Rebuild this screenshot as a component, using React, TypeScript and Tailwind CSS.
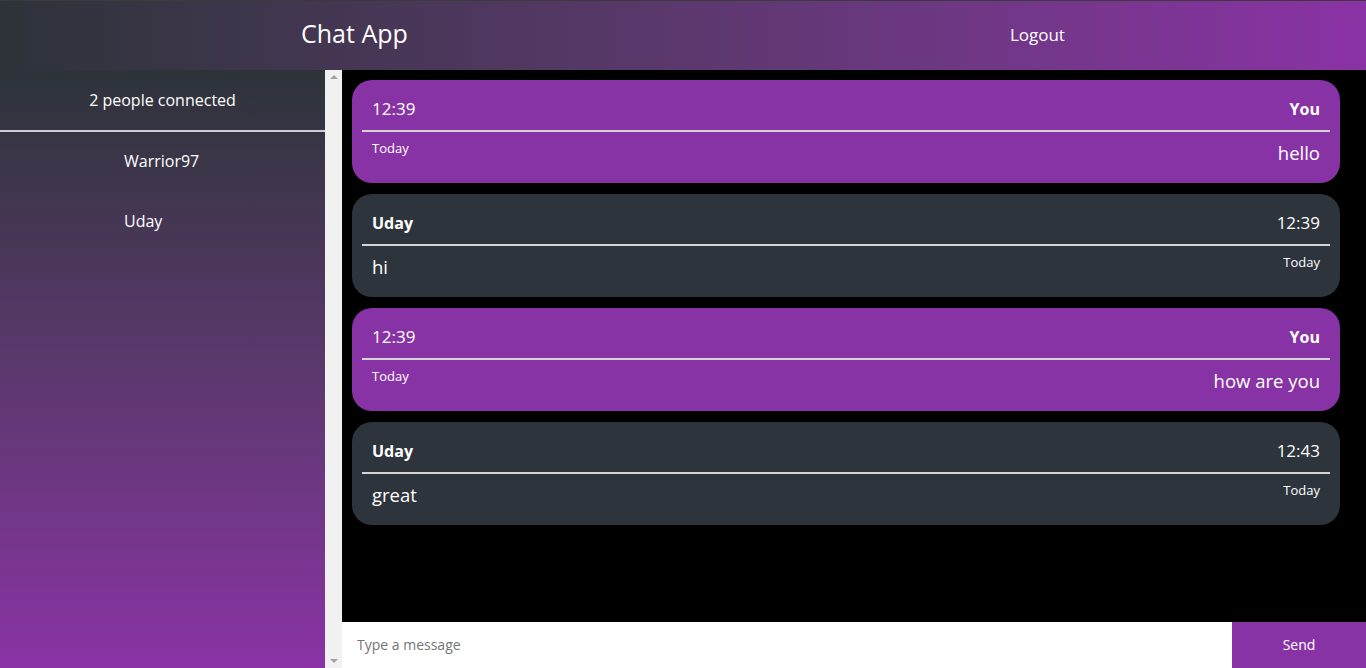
import React from 'react'

type Msg = {
  mine: boolean
  user: string
  time: string
  text: string
}

const messages: Msg[] = [
  { mine: true, user: 'You', time: '12:39', text: 'hello' },
  { mine: false, user: 'Uday', time: '12:39', text: 'hi' },
  { mine: true, user: 'You', time: '12:39', text: 'how are you' },
  { mine: false, user: 'Uday', time: '12:43', text: 'great' },
]

const users = ['Warrior97', 'Uday']

function Bubble({ msg }: { msg: Msg }) {
  const bg = msg.mine ? 'bg-[#8833a5]' : 'bg-[#2d343c]'
  return (
    <div className={`${bg} rounded-[20px] px-[10px] pb-[17px] text-white`}>
      <div className="flex items-center justify-between px-[10px] pt-[17px] pb-[9px] leading-[24px]">
        {msg.mine ? (
          <>
            <span className="text-[17px]">{msg.time}</span>
            <span className="text-[16px] font-bold">{msg.user}</span>
          </>
        ) : (
          <>
            <span className="text-[16px] font-bold">{msg.user}</span>
            <span className="text-[17px]">{msg.time}</span>
          </>
        )}
      </div>
      <div className="border-t-2 border-[#d4d4d4]" />
      <div className="flex items-start justify-between px-[10px] pt-[8px]">
        {msg.mine ? (
          <>
            <span className="text-[13px] leading-[16px]">Today</span>
            <span className="text-[18.5px] leading-[26px]">{msg.text}</span>
          </>
        ) : (
          <>
            <span className="text-[18.5px] leading-[26px]">{msg.text}</span>
            <span className="text-[13px] leading-[16px]">Today</span>
          </>
        )}
      </div>
    </div>
  )
}

export default function App() {
  return (
    <div
      className="h-screen flex flex-col overflow-hidden"
      style={{ fontFamily: '"Open Sans", "Noto Sans", sans-serif' }}
    >
      <header className="h-[70px] shrink-0 flex items-center justify-around bg-gradient-to-r from-[#2d3339] to-[#8a32a5] border-t border-[#3b3b3b] text-white">
        <h1 className="text-[25px] pb-[3px]">Chat App</h1>
        <button className="text-[17px] pb-[2px]">Logout</button>
      </header>

      <div className="flex flex-1 min-h-0">
        <aside className="w-[325px] shrink-0 bg-gradient-to-b from-[#2d3339] to-[#8a32a5] text-white">
          <div className="h-[62px] flex items-center justify-center border-b-2 border-[#cfcfcf] text-[16px]">
            2 people connected
          </div>
          <ul className="pl-[124px] text-[16px] -mt-[1px]">
            {users.map((u) => (
              <li key={u} className="h-[60px] flex items-center">
                {u}
              </li>
            ))}
          </ul>
        </aside>

        <div className="w-[17px] shrink-0 bg-[#f1f1f1] flex flex-col justify-between items-center py-[5px]">
          <span className="w-0 h-0 border-x-[4px] border-x-transparent border-b-[4px] border-b-[#a3a3a3]" />
          <span className="w-0 h-0 border-x-[4px] border-x-transparent border-t-[4px] border-t-[#a3a3a3]" />
        </div>

        <main className="flex-1 flex flex-col bg-black min-w-0">
          <div className="flex-1 flex flex-col gap-[11px] pt-[10px] pl-[10px] pr-[26px]">
            {messages.map((m, i) => (
              <Bubble key={i} msg={m} />
            ))}
          </div>
          <form className="h-[46px] flex shrink-0">
            <input
              type="text"
              placeholder="Type a message"
              className="flex-1 bg-white px-[15px] pb-[2px] text-[14px] text-black placeholder:text-[#757575] outline-none"
            />
            <button
              type="button"
              className="w-[134px] bg-[#8833a5] text-white text-[14px] pb-[2px]"
            >
              Send
            </button>
          </form>
        </main>
      </div>
    </div>
  )
}
